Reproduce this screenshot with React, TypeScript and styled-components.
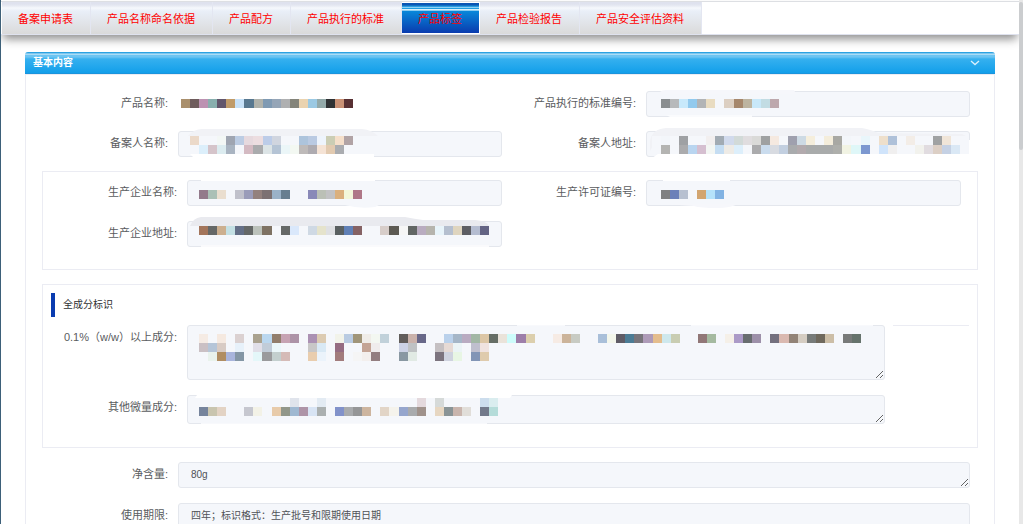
import React from "react";
import styled, { createGlobalStyle, css } from "styled-components";

const GlobalStyle = createGlobalStyle`
  *, *::before, *::after { box-sizing: border-box; }
  body {
    margin: 0;
    background: #fff;
    font-family: "Liberation Sans", "Noto Sans CJK SC", sans-serif;
    font-size: 11px;
    color: #5a5c60;
  }
  button, input, textarea { font-family: inherit; }
`;

const Shell = styled.div`
  display: flex;
  height: 100vh;
  overflow: hidden;
  border-left: 1px solid #3d6079;
`;

const Page = styled.div`
  flex: 1;
  min-width: 0;
  padding-top: 1px;
`;

const ScrollTrack = styled.div`
  position: relative;
  flex: 0 0 4px;
  padding-top: 2px;
  background: #e8e8e8;
`;

const ScrollThumb = styled.div`
  height: 148px;
  border-radius: 2px;
  background: #cbcdcf;
`;

const TabBar = styled.nav`
  display: flex;
  height: 34px;
  padding-left: 1px;
  border-top: 1px solid #dddfe3;
  border-bottom: 1px solid #dfe2ee;
  background: #fff;
  box-shadow: 0 6px 9px -2px rgba(0, 0, 0, 0.45);
`;

const Tab = styled.button<{ $active?: boolean }>`
  height: 32px;
  padding: 2px 17px 0 16px;
  border: 0;
  border-right: 1px solid #e3e6f1;
  font-size: 11px;
  line-height: 30px;
  white-space: nowrap;
  color: #f00;
  background: linear-gradient(#dfe2ee 0 2px, #e8ebf3 4px, #f6f8fc 6px, #e9eff8 9px, #dadada 32px);
  ${(p) =>
    p.$active &&
    css`
      border-color: #fff;
      background: linear-gradient(
          #fff 0 1px,
          #0b55b4 1px 3px,
          #1272c4 3px 4px,
          #2b9be0 4px 5px,
          #8fd0f4 5px 6px,
          #1f9fe2 6px 7px,
          #d9effc 7px 8px,
          #8ccdf0 8px 9px,
          #0788da 9px,
          #0a3bae 31px,
          #fff 31px
        );
    `}
`;

const Panel = styled.section`
  margin: 17px 24px 0;
`;

const PanelHeader = styled.header`
  display: flex;
  align-items: center;
  justify-content: space-between;
  height: 22px;
  padding: 0 15px 0 8px;
  border-radius: 3px 3px 0 0;
  background: linear-gradient(
    #2ba2e2 0 1px,
    #7cc6ee 1px 2px,
    #a9dcf6 2px 3px,
    #6cc4f2 3px 5px,
    #35b0ef 7px,
    #129fea 21px,
    #1a94dc 21px
  );
`;

const PanelTitle = styled.h2`
  margin: 0;
  font-size: 10px;
  line-height: 22px;
  font-weight: bold;
  color: #fff;
`;

const Collapse = styled.button`
  display: flex;
  padding: 0;
  border: 0;
  background: none;
`;

const PanelBody = styled.div`
  display: flex;
  flex-direction: column;
  gap: 14px;
  padding: 16px;
  border: 1px solid #ebecf3;
`;

const Rows = styled.div<{ $inset?: boolean; $gap?: number }>`
  display: flex;
  flex-direction: column;
  gap: ${(p) => p.$gap || 15}px;
  margin: ${(p) => (p.$inset ? "0 8px 0 -8px" : "0")};
`;

const Row = styled.div`
  display: grid;
  grid-template-columns: 1fr 1fr;
`;

const WideRow = styled.div`
  display: grid;
  grid-template-columns: 11fr 1fr;
  column-gap: 8px;
  margin-right: -8px;
`;

const Group = styled.fieldset<{ $end: number }>`
  min-width: 0;
  margin: 0;
  padding: 8px 16px ${(p) => p.$end}px 0;
  border: 1px solid #ebecf3;
`;

const GroupTitle = styled.h3`
  height: 24px;
  margin: 0 0 8px 8px;
  padding-left: 8px;
  border-left: 4px solid #0a3cb0;
  font-size: 10px;
  line-height: 24px;
  font-weight: normal;
  color: #303133;
`;

const Item = styled.div`
  display: flex;
  align-items: flex-start;
`;

const Label = styled.label`
  flex: 0 0 144px;
  padding-right: 10px;
  font-size: 11px;
  line-height: 24px;
  text-align: right;
  white-space: nowrap;
`;

const Control = styled.div`
  position: relative;
  display: flex;
  flex: 1;
  min-width: 0;
  min-height: 26px;
`;

const box = css`
  display: block;
  width: 100%;
  margin: 0;
  padding: 5px 12px;
  border: 1px solid #e4e7ed;
  border-radius: 3px;
  background: #f5f7fb;
  font-size: 10px;
  line-height: 14px;
  color: #505257;
  outline: none;
`;

const TextInput = styled.input`
  ${box}
  height: 26px;
`;

const TextArea = styled.textarea<{ $height: number }>`
  ${box}
  height: ${(p) => p.$height}px;
  resize: vertical;
  overflow: hidden;
`;

const Value = styled.output`
  flex: 1;
`;

const Rule = styled.hr`
  width: 100%;
  margin: 0;
  border: 0;
  border-top: 1px solid #ebecf3;
`;

const Overlay = styled.svg`
  position: absolute;
  left: 0;
  top: 0;
  overflow: visible;
  pointer-events: none;
`;

type Strip = { x: number; y: number; cells: string };
type Smear = { d: string; fill: string };
type Mask = { strips: Strip[]; smears?: Smear[] };

const edge = (i: number) => Math.round(i * 9.07);

/* Pixelated redaction: each strip is a run of hex colours, "-" leaves a gap. */
const Mosaic = ({ strips, smears = [] }: Mask) => (
  <Overlay width="1" height="1" aria-hidden="true" shapeRendering="crispEdges">
    {smears.map((s, i) => (
      <path key={i} d={s.d} fill={s.fill} shapeRendering="auto" />
    ))}
    {strips.map((s, r) =>
      s.cells.split(" ").map((c, i) =>
        c === "-" ? null : (
          <rect key={`${r}-${i}`} x={s.x + edge(i)} y={s.y} width={edge(i + 1) - edge(i)} height="9" fill={`#${c}`} />
        )
      )
    )}
  </Overlay>
);

const productName: Mask = {
  strips: [
    {
      x: 3,
      y: 8,
      cells:
        "a98f6c 6e5c5c bc92b2 88afae 62566c c09b69 c7e1f8 587890 b0b2ab 7f9ab3 95a5b7 afb0b1 84847a ead3b0 9bc9e3 93a9a9 303234 c99175 583033",
    },
  ],
};

const standardNo: Mask = {
  smears: [
    { d: "M14 1Q16-1 20-1H148L150 3H14Z", fill: "#f6f7fb" },
    { d: "M20 24H106V26H24Z", fill: "#fafbfd" },
  ],
  strips: [{ x: 15, y: 8, cells: "8a8e90 b7b9bb c8e9fb 92caee b2b4b6 e9dcc1 - dccfc2 a6876c bdb4a0 c8e8f9 c2dce3 bda8ad" }],
};

const filerName: Mask = {
  smears: [
    { d: "M10 5Q16-2 24-2H184Q194-1 200 5Z", fill: "#f1f2f6" },
    { d: "M12 23H196V26H15Z", fill: "#fff" },
  ],
  strips: [
    {
      x: 12,
      y: 5,
      cells:
        "ebd9c9 - - f3f7f5 9fa5b1 bccce3 e6d9de ecdde0 bccce8 d0d5df - - adc4dc bacae2 eef4fc cbcdb4 f5dfca b1a3a5",
    },
    {
      x: 12,
      y: 14,
      cells:
        "- dceffb d5c4ca dcecf0 a9b4c1 - d4bac2 aaabad dce4e6 b5c4d5 ebf6f8 f3f8f2 bebab9 aeabb0 f5e3d5 e2cab0 aaacb0",
    },
  ],
};

const filerAddress: Mask = {
  smears: [
    { d: "M4 20V10Q6-2 20-3H216Q226-1 232 2L316 3L320 5H12Z", fill: "#f1f2f6" },
    { d: "M6 5H323V23H6Z", fill: "#f5f7fb" },
    { d: "M323 9H326V27H6L12 23H323Z", fill: "#fff" },
  ],
  strips: [
    {
      x: 15,
      y: 5,
      cells:
        "f3f6fa - 9fa1a4 - - f2efef a2abb3 d1daec d2dad8 e0dddf dadad8 9fa1a2 f5e9e0 - 9fa0ae cddae4 f5eedc - f4eddb a8a8a3 f3f6fa - e9f6fb - eedfcb afc1d9 - f3ede7 - - a0a2a3 f0e5d8",
    },
    {
      x: 15,
      y: 14,
      cells:
        "b4b4b2 - ababad b9d5f0 d5bfd0 f3f6f3 c5ddf2 eeebe6 ddeffb - ababad cadcee d8dbe1 c2cfe0 a9abad b2aaad a9abab a9abab a9abab aeafab f1f3e3 dff7f8 7c98d0 - d0e4fb f0efef - - f2f2ed e1dce0 dccfc5 c5d1e4 dae8f5",
    },
  ],
};

const makerName: Mask = {
  smears: [
    { d: "M14 0H188V1H14Z", fill: "#fff" },
    { d: "M158 24H194L188 27Q172 29 158 25Z", fill: "#f5f7fb" },
  ],
  strips: [
    {
      x: 12,
      y: 10,
      cells:
        "937a8b abc0b6 eadecf - c0c1cb 9a9cb9 93817d 7c7172 9ab2c8 677e90 - - 8989b8 bbc0b6 c2c2c4 dbb07d f3f7da af7787",
    },
  ],
};

const licenceNo: Mask = {
  smears: [
    { d: "M17 0H84V1H17Z", fill: "#fff" },
    { d: "M18 24H92Q84 28 72 28Q54 28 48 26Z", fill: "#f6f7fb" },
  ],
  strips: [{ x: 15, y: 10, cells: "7f8081 6c80b9 b7c0d0 - d2a570 b5e2fa 82b3e3" }],
};

const makerAddress: Mask = {
  smears: [
    { d: "M3 5Q6-3 14-4H218Q228-2 236-1H288Q300 0 302 5Z", fill: "#e9eaef" },
    { d: "M14 24H302V26H14Z", fill: "#fafafc" },
  ],
  strips: [
    {
      x: 12,
      y: 5,
      cells:
        "a3755b 656867 ccaf8f c4e0e4 646f87 656867 bcc2bb 7e7263 - 656867 dae8fb - cfd9e4 e5e3cc dfe0e3 5a6061 6080b6 856264 - - d7cdc9 5d5a53 f6f6f6 626664 b9acc0 b6b4ad e8f4fa b5bfcf dfd5bf 5d5e63 b5bdd1 646484",
    },
  ],
};

const mainIngredients: Mask = {
  smears: [{ d: "M330 0H378V1H330ZM504 0H686V1H504Z", fill: "#f8f9fc" }],
  strips: [
    {
      x: 12,
      y: 9,
      cells:
        "f5ebe4 - f5e9e0 - dbd1d1 - aaa28f bad7ef 927e6c c7a3b3 ad93a7 - ab91b3 dccbb2 - f2f3ea b9cbe2 a09579 efece8 f3f7f1 c1d1da - 615d5b cab2ab 686889 - - bad1eb a5b6c7 b9abc1 a2b7a5 dcc6a5 666e66 eae3da cdfcfb 9d7ea9 dccfad - - f6ebe4 ccb49a c8cbc3 - - a9bfd9 f3f6eb 5f5c66 4c7c95 78757b ae9bb8 e4bd8d cee8ed c9cdb2 - - 917777 a5baa0 - f5f0e8 ab9ac7 686d6f 9d90a9 - 74707e dab9b0 928377 d5cdc2 777b79 6f695d ccbea7 - 787a79 66736c",
    },
    {
      x: 12,
      y: 18,
      cells:
        "cac0c4 b5c5d8 d8cbc4 - e7f1fa - e1dfe8 c1ccd8 ebf7fa - - - c8c7c7 d9e9f5 - 956c82 - - c4a495 efecec - - ccd2e5 bfc2c4 - - c5c0c2 e6dad5 ebf4f6 - bfbfce f0e3e0",
    },
    {
      x: 12,
      y: 27,
      cells:
        "- e9f2ec b08d62 a8b4dc 8496a5 - e4f7f9 9a9a9c c3cfce d5bbb7 - - e9cdae ebf3fb - a27c7c - f5f5f5 f3efed 937e80 - - 8998a2 e1eae4 - - 7c747e cfd3df e8f6e4 - 8295b6 dfcbad",
    },
  ],
};

const traceIngredients: Mask = {
  smears: [
    { d: "M10 0H325L323 3H8Z", fill: "#fff" },
    { d: "M14 28H300V29H14Z", fill: "#f8f9fc" },
  ],
  strips: [
    {
      x: 12,
      y: 3,
      cells: "- - - - - - - - - - e0e4ec - - e3ebf3 - - - - - - - - - - e4d9dd - d6dad9 - - - - ccdded daedef",
    },
    {
      x: 12,
      y: 12,
      cells:
        "76849c c9c5af e3d3c4 - - c6c7cf f3f2e7 - e8cbaa 92978a 9fb8d1 ae94a7 d8e4f4 abb0b0 - 8292ca a9abad 959697 cdb59f - e2d5c7 f5f3ec 96a6cd a9abad a0928b - e7d7c2 8a9496 c9b5ad e1ded9 - 72798a b5dcd9",
    },
  ],
};

type FieldProps = { id: string; label: string; kind?: "input" | "area" | "text"; height?: number; value?: string; mask?: Mask };

const Field = ({ id, label, kind = "input", height = 26, value = "", mask }: FieldProps) => (
  <Item>
    <Label htmlFor={id}>{label}:</Label>
    <Control>
      {kind === "input" && <TextInput id={id} readOnly value={value} />}
      {kind === "area" && <TextArea id={id} readOnly rows={1} $height={height} value={value} />}
      {kind === "text" && <Value id={id} />}
      {mask && <Mosaic {...mask} />}
    </Control>
  </Item>
);

const tabs = [
  "备案申请表",
  "产品名称命名依据",
  "产品配方",
  "产品执行的标准",
  "产品标签",
  "产品检验报告",
  "产品安全评估资料",
];

export default function App() {
  return (
    <Shell>
      <GlobalStyle />
      <Page>
        <TabBar>
          {tabs.map((t) => (
            <Tab key={t} type="button" $active={t === "产品标签"}>
              {t}
            </Tab>
          ))}
        </TabBar>
        <Panel>
          <PanelHeader>
            <PanelTitle>基本内容</PanelTitle>
            <Collapse type="button" aria-label="收起">
              <svg width="10" height="6" viewBox="0 0 10 6" fill="none" stroke="#d9f0fd" strokeWidth="1.3">
                <path d="M1 1l4 3.6L9 1" />
              </svg>
            </Collapse>
          </PanelHeader>
          <PanelBody>
            <Rows $inset $gap={14}>
              <Row>
                <Field id="productName" label="产品名称" kind="text" mask={productName} />
                <Field id="standardNo" label="产品执行的标准编号" mask={standardNo} />
              </Row>
              <Row>
                <Field id="filerName" label="备案人名称" mask={filerName} />
                <Field id="filerAddress" label="备案人地址" mask={filerAddress} />
              </Row>
            </Rows>
            <Group $end={22}>
              <Rows>
                <Row>
                  <Field id="makerName" label="生产企业名称" mask={makerName} />
                  <Field id="licenceNo" label="生产许可证编号" mask={licenceNo} />
                </Row>
                <Row>
                  <Field id="makerAddress" label="生产企业地址" mask={makerAddress} />
                </Row>
              </Rows>
            </Group>
            <Group $end={23}>
              <GroupTitle>全成分标识</GroupTitle>
              <Rows>
                <WideRow>
                  <Field id="mainIngredients" label="0.1%（w/w）以上成分" kind="area" height={55} mask={mainIngredients} />
                  <Rule />
                </WideRow>
                <WideRow>
                  <Field id="traceIngredients" label="其他微量成分" kind="area" height={29} mask={traceIngredients} />
                </WideRow>
              </Rows>
            </Group>
            <Rows $inset>
              <Field id="netContent" label="净含量" kind="area" value="80g" />
              <Field id="shelfLife" label="使用期限" kind="area" height={40} value="四年；标识格式：生产批号和限期使用日期" />
            </Rows>
          </PanelBody>
        </Panel>
      </Page>
      <ScrollTrack aria-hidden="true">
        <ScrollThumb />
      </ScrollTrack>
    </Shell>
  );
}
